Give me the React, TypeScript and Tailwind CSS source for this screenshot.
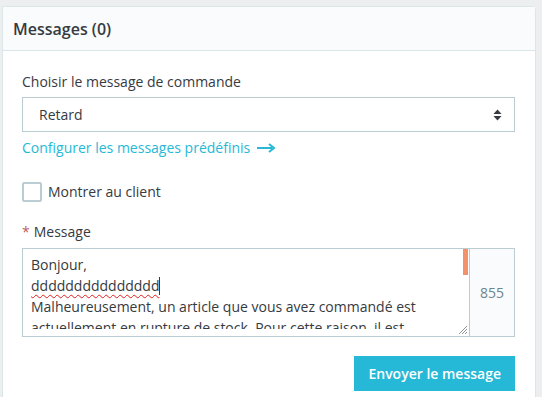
const font = { fontFamily: '"Open Sans", "Noto Sans", sans-serif' };

const SelectArrows = () => (
  <svg width="9" height="12" viewBox="0 0 9 12" className="text-[#363a41]">
    <path d="M4.5 0.5 L8.5 5 H0.5 Z" fill="currentColor" />
    <path d="M4.5 11.5 L8.5 7 H0.5 Z" fill="currentColor" />
  </svg>
);

const LongArrow = () => (
  <svg width="18" height="10" viewBox="0 0 18 10" className="ml-[7px]">
    <path d="M0 5 H15" stroke="#25b9d7" strokeWidth="2" />
    <path d="M12 1 L17 5 L12 9" stroke="#25b9d7" strokeWidth="2" fill="none" />
  </svg>
);

const ResizeGrip = () => (
  <svg width="9" height="9" viewBox="0 0 9 9" className="absolute right-[2px] bottom-[2px]">
    <path d="M9 1 L1 9 M9 4 L4 9 M9 7 L7 9" stroke="#8a9499" strokeWidth="1" />
  </svg>
);

export default function App() {
  return (
    <div className="w-[542px] h-[397px] bg-[#eceef0] pt-[6px] overflow-hidden text-[#363a41]" style={font}>
      <div className="ml-[2px] w-[534px] h-[400px] bg-white border border-[#dbe6e9] rounded-tr-[4px]">
        <div className="h-[44px] bg-[#fafbfc] border-b border-[#dbe6e9] flex items-center pl-[10px]">
          <h2 className="text-[16px] font-semibold">Messages (0)</h2>
        </div>

        <div className="pl-[19px] pr-[20px] pt-[21px]">
          <label className="block text-[14px] leading-[20px]">Choisir le message de commande</label>

          <div className="mt-[5px] h-[35px] border border-[#bbcdd2] flex items-center justify-between pl-[16px] pr-[12px] text-[14px]">
            <span>Retard</span>
            <SelectArrows />
          </div>

          <a className="mt-[6px] flex items-center text-[14px] leading-[20px] text-[#25b9d7]">
            Configurer les messages prédéfinis
            <LongArrow />
          </a>

          <label className="mt-[23px] flex items-center gap-[6px] text-[14px]">
            <span className="w-[20px] h-[20px] border-2 border-[#bbcdd2] rounded-[2px] bg-white"></span>
            Montrer au client
          </label>

          <div className="mt-[20px] text-[14px] leading-[20px]">
            <span className="text-[#c05c67] mr-[4px]">*</span>
            Message
          </div>

          <div className="mt-[6px] flex h-[89px] border border-[#bbcdd2]">
            <div className="relative flex-1 border-r border-[#bbcdd2]">
              <div className="h-[80px] overflow-hidden pl-[8px] pr-[10px] pt-[5px] text-[14px] leading-[21px]">
                <div>Bonjour,</div>
                <div className="flex items-center">
                  <span className="underline decoration-wavy decoration-[#e02020] decoration-1 underline-offset-[3px]">
                    ddddddddddddddd
                  </span>
                  <span className="inline-block w-[1px] h-[18px] bg-[#363a41]"></span>
                </div>
                <div className="whitespace-nowrap">Malheureusement, un article que vous avez commandé est</div>
                <div className="whitespace-nowrap">actuellement en rupture de stock. Pour cette raison, il est</div>
              </div>
              <div className="absolute right-[1px] top-0 w-[5px] h-[26px] bg-[#f4916b]"></div>
              <ResizeGrip />
            </div>
            <div className="w-[44px] bg-[#fafbfc] flex items-center justify-center text-[14px] text-[#6c868e]">
              855
            </div>
          </div>

          <div className="mt-[19px] flex justify-end">
            <button className="h-[35px] px-[14px] bg-[#25b9d7] text-white text-[14px] font-semibold">
              Envoyer le message
            </button>
          </div>
        </div>
      </div>
    </div>
  );
}
